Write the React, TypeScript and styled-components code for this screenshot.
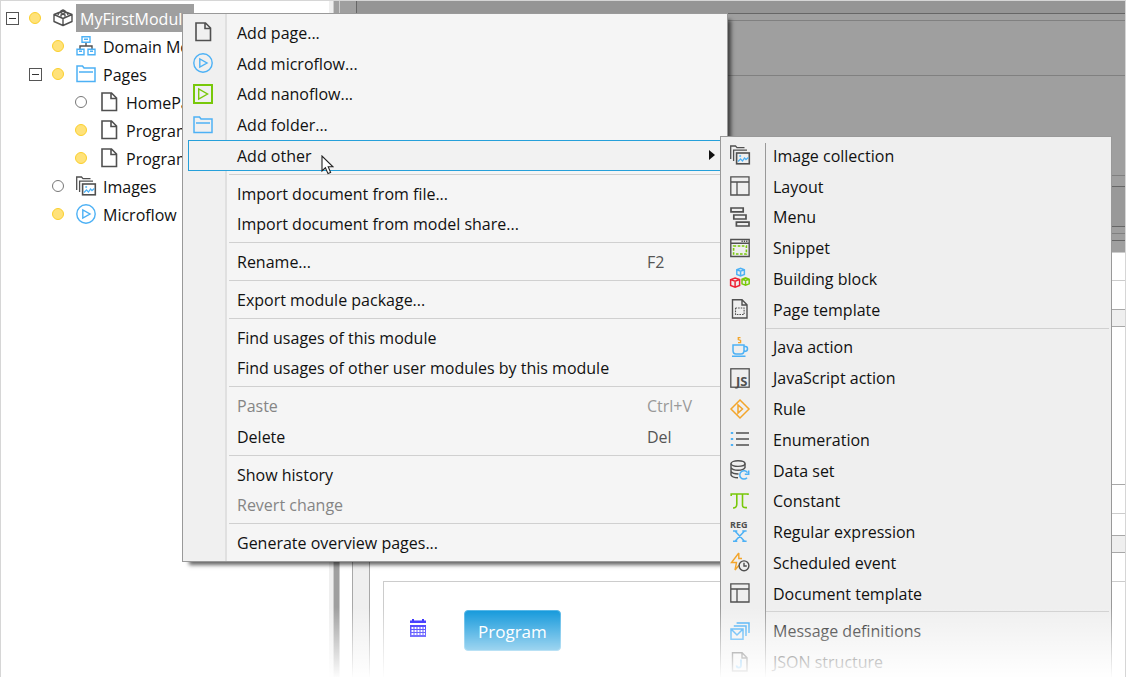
import React from "react";
import styled, { createGlobalStyle, css } from "styled-components";

const ink = "#505050";
const blue = "#4db1f5";
const green = "#78c80a";
const orange = "#f3a52b";

const GlobalStyle = createGlobalStyle`
  *, *::before, *::after { box-sizing: border-box; }
  body {
    margin: 0;
    background: #fff;
    color: #111;
    font: 16px/20px "Open Sans", "Noto Sans", sans-serif;
  }
  button { font: inherit; color: inherit; }
  ul { list-style: none; margin: 0; padding: 0; }
`;

/* ---------- Icons ---------- */

const Svg = styled.svg`
  display: block;
  flex: none;
  width: 20px;
  height: 20px;
  fill: none;
  overflow: visible;
`;

const PageIcon = () => (
  <Svg viewBox="0 0 20 20" stroke={ink} strokeWidth="1.6">
    <path d="M3 1H12.5L17.5 6V18.5H3ZM12 1V6.5H17.5" />
  </Svg>
);

const MicroflowIcon = () => (
  <Svg viewBox="0 0 20 20" stroke={blue} strokeWidth="1.4">
    <circle cx="10" cy="10" r="9.2" />
    <path d="M6.8 6V14L14 10Z" />
  </Svg>
);

const NanoflowIcon = () => (
  <Svg viewBox="0 0 20 20" stroke={green} strokeWidth="1.4">
    <rect x="1" y="1" width="18" height="18" strokeWidth="2" />
    <path d="M5.7 5V15L14.5 10Z" />
  </Svg>
);

const FolderIcon = () => (
  <Svg viewBox="0 0 20 20" stroke={blue} strokeWidth="1.5">
    <path d="M1 17.5V2H6.5L8 4H19V17.5ZM3 8H17" />
  </Svg>
);

const ModuleIcon = () => (
  <Svg viewBox="0 0 20 20" stroke={ink} strokeWidth="1.4" strokeLinejoin="round">
    <path d="M1 6.5L10 3L19 6.5L10 10.5ZM1 6.5V13.5L10 17.5L19 13.5V6.5M10 10.5V17.5" />
    <path d="M5.2 7V5.2L7.4 4.4L9 5.2V7M11 7V5.2L12.8 4.4L14.8 5.2V7M8 4.4V2.8L10 2L12 2.8V4.4M8 8.8V7L10 6.2L12 7V8.8" />
  </Svg>
);

const DomainIcon = () => (
  <Svg viewBox="0 0 20 20" stroke={blue} strokeWidth="1.4">
    <path d="M10 6V10M4 14V10H16V14" stroke={ink} />
    <path d="M6 .8H14V6.2H6ZM1 13.2H8V18.8H1ZM12 13.2H19V18.8H12Z" />
    <path d="M8 3.2H12M3 15.2H6M14 15.2H17" />
  </Svg>
);

const ImagesIcon = () => (
  <Svg viewBox="0 0 20 20" stroke={ink} strokeWidth="1.3">
    <path d="M.7 14V1H5.5L7 2.6H14.5M3.6 16V5.2H17" />
    <rect x="6.6" y="8" width="12.7" height="10.8" strokeWidth="1.6" />
    <path d="M8 16.5L10.5 14L12.5 16L14.5 13L16 14.5L18.4 12.5" stroke={blue} />
    <circle cx="10.2" cy="11" r=".7" fill={blue} stroke={blue} strokeWidth=".6" />
  </Svg>
);

const LayoutIcon = () => (
  <Svg viewBox="0 0 20 20" stroke={ink} strokeWidth="1.3">
    <path d="M.8 .8H19V19H.8ZM.8 6H19M7 6V19" />
  </Svg>
);

const MenuIcon = () => (
  <Svg viewBox="0 0 20 20" stroke={ink} strokeWidth="1.7">
    <path d="M1 1H13.2V4.8H1ZM3.8 8H16V12H3.8ZM6.4 15.2H19V19H6.4Z" />
  </Svg>
);

const SnippetIcon = () => (
  <Svg viewBox="0 0 20 20" stroke={ink} strokeWidth="1.4">
    <path d="M.8 1.5H19.2V18.5H.8ZM.8 5.2H19.2" />
    <path d="M11.5 3.2H18" strokeDasharray="1.3 1" />
    <rect x="3.6" y="8" width="12.8" height="8" stroke={green} strokeWidth="1.6" strokeDasharray="2.6 1.5" />
  </Svg>
);

const Cube = ({ x, y, s, color }: { x: number; y: number; s: number; color: string }) => (
  <path
    transform={`translate(${x} ${y}) scale(${s})`}
    stroke={color}
    strokeWidth={1.5 / s}
    d="M0 2L4.5 .4L9 2V7.8L4.5 9.6L0 7.8ZM0 2L4.5 3.7L9 2M4.5 3.7V9.6"
  />
);

const BlocksIcon = () => (
  <Svg viewBox="0 0 20 20">
    <Cube x={6.8} y={0} s={0.84} color={blue} />
    <Cube x={0.6} y={9.6} s={1} color="#ee2234" />
    <Cube x={12} y={9.6} s={0.8} color={green} />
  </Svg>
);

const TemplateIcon = () => (
  <Svg viewBox="0 0 20 20" stroke={ink} strokeWidth="1.4">
    <path d="M2.5 .8H12L17 5.8V19H2.5ZM12 .8V6H17" />
    <rect x="5.5" y="9" width="8.6" height="6.5" strokeDasharray="1.6 1" strokeWidth="1.1" />
  </Svg>
);

const JavaIcon = () => (
  <Svg viewBox="0 0 20 20" stroke={blue} strokeWidth="1.5">
    <path d="M3 8H14V13.5Q14 17 11 17H6Q3 17 3 13.5ZM14 9.5H15.5Q17.5 9.5 17.5 12Q17.5 14.5 14 14.5M2 19.2H15.5" />
    <path d="M10.5 0.6H8.3V2.6L10.6 3.4V5.6H8" stroke={orange} strokeWidth="1.3" />
  </Svg>
);

const IconText = styled.text`
  font-family: "Open Sans", sans-serif;
  font-weight: 700;
  fill: ${ink};
`;

const JsIcon = () => (
  <Svg viewBox="0 0 20 20">
    <rect x=".8" y=".8" width="18.4" height="18.4" stroke={ink} strokeWidth="1.3" />
    <IconText x="6" y="18" fontSize="13">JS</IconText>
  </Svg>
);

const RuleIcon = () => (
  <Svg viewBox="0 0 20 20" stroke={orange} strokeWidth="1.5">
    <path d="M10 1L19 10L10 19L1 10ZM8 6V14L12.5 10Z" />
  </Svg>
);

const EnumIcon = () => (
  <Svg viewBox="0 0 20 20" stroke={ink} strokeWidth="1.4">
    <path d="M6 4H19M6 10H19M6 16H19" />
    <path d="M.8 4H3.2M.8 10H3.2M.8 16H3.2" stroke={blue} strokeWidth="2.2" />
  </Svg>
);

const DataSetIcon = () => (
  <Svg viewBox="0 0 20 20" stroke={ink} strokeWidth="1.4">
    <ellipse cx="8" cy="3.6" rx="7" ry="2.8" />
    <path d="M1 3.6V15Q2 17.6 8 17.8M15 3.6V8M1 7.6Q2.5 10.3 8 10.3Q13.5 10.3 15 7.6M1 11.4Q2.5 14 8.5 14" />
    <path d="M17.5 12.6A4.2 4.2 0 1 0 17 17.8M18.7 10.4V14.2H14.8" stroke={blue} strokeWidth="1.5" />
  </Svg>
);

const PiIcon = () => (
  <Svg viewBox="0 0 20 20" stroke={green} strokeWidth="1.6">
    <path d="M1.2 5V3H18V4M6.8 3V13Q6.8 17 3 17M12.5 3V14.5Q12.5 17 17 16.6" />
  </Svg>
);

const RegexIcon = () => (
  <Svg viewBox="0 0 20 20">
    <IconText x="0" y="6" fontSize="9">REG</IconText>
    <path d="M5 9L14.5 19.2M14.5 9L5 19.2M3 9H7.3M12.3 9H16.6M3 19.3H7.3M12.3 19.3H16.6" stroke={blue} strokeWidth="1.5" />
  </Svg>
);

const EventIcon = () => (
  <Svg viewBox="0 0 20 20" strokeWidth="1.4">
    <path d="M8.8 1L1.5 10.5H6.5L5 18L9 13.2M8.8 1V6.5H12" stroke={orange} />
    <circle cx="14" cy="13.8" r="4.9" stroke={ink} />
    <path d="M14 10.8V14H16.8" stroke={ink} />
  </Svg>
);

const MessagesIcon = () => (
  <Svg viewBox="0 0 20 20" stroke="#35a6f5" strokeWidth="1.5">
    <path d="M1 8H13V18.2H1ZM1 8L7 14L13 8M3.8 5H16V15M6.6 2H19V12" />
  </Svg>
);

const JsonIcon = () => (
  <Svg viewBox="0 0 20 20" stroke={ink} strokeWidth="1.4">
    <path d="M2.5 .8H12L17 5.8V19H2.5ZM12 .8V6H17" />
    <path d="M11 7.5V13.2Q11 15.6 8.6 15.6Q6.6 15.6 6.6 13.6" stroke="#3da9f5" strokeWidth="1.7" />
  </Svg>
);

const CalendarIcon = styled.svg`
  display: block;
  width: 16px;
  height: 18px;
`;

/* ---------- Shell ---------- */

const Frame = styled.div`
  position: relative;
  display: flex;
  min-height: 100vh;
  overflow: hidden;
  border: 1px solid #d6d6d6;
  border-bottom: 0;
`;

const TreePane = styled.nav`
  flex: none;
  width: 332px;
  padding-top: 3px;
  border-right: 4px solid #efefef;
`;

const Splitter = styled.div`
  flex: none;
  width: 7px;
  background: #9f9f9f;
  border: solid #ccc;
  border-width: 0 1px;
`;

/* ---------- Tree ---------- */

const TreeRow = styled.li<{ $level: number }>`
  display: flex;
  align-items: center;
  height: 28px;
  padding-left: ${(p) => 5 + p.$level * 23}px;
  white-space: nowrap;
`;

const Toggle = styled.button`
  position: relative;
  width: 13px;
  height: 13px;
  padding: 0;
  background: #fff;
  border: 1px solid #555;

  &::after {
    content: "";
    position: absolute;
    inset: 5px 2px;
    background: #333;
  }
`;

const ToggleGap = styled.span`
  width: 13px;
`;

const Dot = styled.span<{ $on: boolean }>`
  width: 12px;
  height: 12px;
  margin: 0 12px 0 10px;
  border-radius: 50%;
  background: ${(p) => (p.$on ? "#ffe27a" : "#fff")};
  border: 1px solid ${(p) => (p.$on ? "#fbcf2c" : "#777")};
`;

const TreeLabel = styled.span<{ $selected?: boolean }>`
  margin-left: 3px;
  padding: 5px 3px 3px 4px;
  ${(p) =>
    p.$selected &&
    css`
      background: #9f9f9f;
      color: #fff;
    `}
`;

type Node = { level: number; label: string; on: boolean; open?: boolean; selected?: boolean; icon: React.ReactNode };

const nodes: Node[] = [
  { level: 0, label: "MyFirstModule", on: true, open: true, selected: true, icon: <ModuleIcon /> },
  { level: 1, label: "Domain Model", on: true, icon: <DomainIcon /> },
  { level: 1, label: "Pages", on: true, open: true, icon: <FolderIcon /> },
  { level: 2, label: "HomePage", on: false, icon: <PageIcon /> },
  { level: 2, label: "Programs", on: true, icon: <PageIcon /> },
  { level: 2, label: "Program", on: true, icon: <PageIcon /> },
  { level: 1, label: "Images", on: false, icon: <ImagesIcon /> },
  { level: 1, label: "Microflow", on: true, icon: <MicroflowIcon /> },
];

/* ---------- Editor ---------- */

const Editor = styled.main`
  flex: 1;
  display: flex;
  flex-direction: column;
  min-width: 0;
`;

const Band = styled.div<{ $h: number; $fill?: string; $line: string }>`
  flex: none;
  height: ${(p) => p.$h}px;
  background: ${(p) => p.$fill ?? "#fff"};
  border-bottom: 1px solid ${(p) => p.$line};
`;

const Corner = styled.div`
  width: 17px;
  height: 100%;
  background: #9f9f9f;
  border-right: 1px solid #666;
`;

const Canvas = styled.div`
  flex: 1;
  display: flex;
  padding-left: 12px;
`;

const Rail = styled.div`
  flex: none;
  width: 18px;
  background: #efefef;
  border: solid #a8a8a8;
  border-width: 0 1px;
`;

const Sheet = styled.div`
  flex: 1;
  display: flex;
  flex-direction: column;
`;

const Container = styled.section`
  flex: 1;
  display: flex;
  align-items: flex-start;
  gap: 38px;
  margin: 28px 0 0 13px;
  padding: 28px 26px;
  border: solid #ccc;
  border-width: 1px 0 0 1px;
`;

const CalendarSlot = styled.div`
  padding-top: 9px;
`;

const ProgramButton = styled.button`
  height: 41px;
  padding: 2px 13px 0;
  border: 1px solid #4fb4e6;
  border-radius: 4px;
  background: #0b95da;
  color: #fff;
  font-size: 17px;
`;

/* ---------- Menus ---------- */

const MenuPanel = styled.ul<{ $sub?: boolean }>`
  position: absolute;
  display: flex;
  flex-direction: column;
  border: 1px solid #999;
  ${(p) =>
    p.$sub
      ? css`
          left: 719px;
          top: 135px;
          width: 392px;
          height: 541px;
          padding: 3px 2px 0 0;
          border-bottom: 0;
          background: #efefef;
        `
      : css`
          left: 181px;
          top: 12px;
          width: 546px;
          height: 549px;
          padding: 3px 5px;
          background: linear-gradient(90deg, #f0f0f0 42px, #e0e0e0 42px, #e0e0e0 44px, #f5f5f5 44px);
          box-shadow: 5px 5px 4px -2px rgba(0, 0, 0, 0.6);
        `}
`;

const Gutter = styled.li`
  position: absolute;
  left: 44px;
  top: 6px;
  bottom: 0;
  width: 1px;
  background: #999;
`;

const Slot = styled.li`
  flex: 1;
  display: flex;
`;

const MenuItem = styled.button<{ $sub?: boolean; $active?: boolean; $dim?: boolean }>`
  flex: 1;
  display: flex;
  align-items: center;
  gap: ${(p) => (p.$sub ? 23 : 24)}px;
  padding: 0 6px 0 ${(p) => (p.$sub ? 8 : 4)}px;
  border: 1px solid ${(p) => (p.$active ? "#26a0da" : "transparent")};
  background: ${(p) => (p.$active ? "#f2f2f2" : "none")};
  color: ${(p) => (p.$dim ? "#858585" : "inherit")};
  text-align: left;
  white-space: nowrap;
`;

const IconSlot = styled.span`
  flex: none;
  width: 20px;
`;

const Label = styled.span`
  flex: 1;
  padding-top: 1px;
`;

const Shortcut = styled.span<{ $dim?: boolean }>`
  width: 68px;
  padding-top: 1px;
  color: ${(p) => (p.$dim ? "#999" : "#555")};
`;

const Arrow = styled.span`
  border: solid transparent;
  border-width: 5px 0 5px 6px;
  border-left-color: #111;
`;

const Separator = styled.li<{ $sub?: boolean }>`
  flex: none;
  height: 7px;
  margin-left: ${(p) => (p.$sub ? 45 : 41)}px;
  padding-top: 3px;

  &::after {
    content: "";
    display: block;
    height: 1px;
    background: #d0d0d0;
  }
`;

type Entry = null | { label: string; icon?: React.ReactNode; keys?: string; dim?: boolean; active?: boolean };

const mainEntries: Entry[] = [
  { label: "Add page...", icon: <PageIcon /> },
  { label: "Add microflow...", icon: <MicroflowIcon /> },
  { label: "Add nanoflow...", icon: <NanoflowIcon /> },
  { label: "Add folder...", icon: <FolderIcon /> },
  { label: "Add other", active: true },
  null,
  { label: "Import document from file..." },
  { label: "Import document from model share..." },
  null,
  { label: "Rename...", keys: "F2" },
  null,
  { label: "Export module package..." },
  null,
  { label: "Find usages of this module" },
  { label: "Find usages of other user modules by this module" },
  null,
  { label: "Paste", keys: "Ctrl+V", dim: true },
  { label: "Delete", keys: "Del" },
  null,
  { label: "Show history" },
  { label: "Revert change", dim: true },
  null,
  { label: "Generate overview pages..." },
];

const subEntries: Entry[] = [
  { label: "Image collection", icon: <ImagesIcon /> },
  { label: "Layout", icon: <LayoutIcon /> },
  { label: "Menu", icon: <MenuIcon /> },
  { label: "Snippet", icon: <SnippetIcon /> },
  { label: "Building block", icon: <BlocksIcon /> },
  { label: "Page template", icon: <TemplateIcon /> },
  null,
  { label: "Java action", icon: <JavaIcon /> },
  { label: "JavaScript action", icon: <JsIcon /> },
  { label: "Rule", icon: <RuleIcon /> },
  { label: "Enumeration", icon: <EnumIcon /> },
  { label: "Data set", icon: <DataSetIcon /> },
  { label: "Constant", icon: <PiIcon /> },
  { label: "Regular expression", icon: <RegexIcon /> },
  { label: "Scheduled event", icon: <EventIcon /> },
  { label: "Document template", icon: <LayoutIcon /> },
  null,
  { label: "Message definitions", icon: <MessagesIcon /> },
  { label: "JSON structure", icon: <JsonIcon /> },
];

const Menu = ({ entries, sub }: { entries: Entry[]; sub?: boolean }) => (
  <MenuPanel $sub={sub} role="menu">
    {sub && <Gutter role="presentation" />}
    {entries.map((e, i) =>
      e ? (
        <Slot key={i} role="none">
          <MenuItem type="button" role="menuitem" $sub={sub} $active={e.active} $dim={e.dim} disabled={e.dim}>
            <IconSlot>{e.icon}</IconSlot>
            <Label>{e.label}</Label>
            {e.keys && <Shortcut $dim={e.dim}>{e.keys}</Shortcut>}
            {e.active && <Arrow />}
          </MenuItem>
        </Slot>
      ) : (
        <Separator key={i} role="separator" $sub={sub} />
      )
    )}
  </MenuPanel>
);

const Pointer = styled.svg`
  position: absolute;
  left: 320px;
  top: 154px;
  width: 13px;
  height: 20px;
`;

const Fade = styled.div`
  position: absolute;
  inset: auto -1px 0;
  height: 72px;
  background: linear-gradient(rgba(255, 255, 255, 0), #fff);
  pointer-events: none;
`;

export default function App() {
  return (
    <>
      <GlobalStyle />
      <Frame>
        <TreePane aria-label="Project explorer">
          <ul>
            {nodes.map((n) => (
              <TreeRow key={n.label} $level={n.level}>
                {n.open ? <Toggle type="button" aria-label={`Collapse ${n.label}`} /> : <ToggleGap />}
                <Dot $on={n.on} />
                {n.icon}
                <TreeLabel $selected={n.selected}>{n.label}</TreeLabel>
              </TreeRow>
            ))}
          </ul>
        </TreePane>
        <Splitter />
        <Editor>
          <Band $h={13} $fill="#959595" $line="#666"><Corner /></Band>
          <Band $h={7} $fill="#9f9f9f" $line="#808080" />
          <Band $h={55} $fill="#9f9f9f" $line="#808080" />
          <Band $h={100} $fill="#9f9f9f" $line="#808080" />
          <Band $h={11} $fill="#9f9f9f" $line="#666" />
          <Band $h={40} $fill="#999" $line="#666" />
          <Band $h={7} $fill="#9f9f9f" $line="#808080" />
          <Band $h={7} $fill="#9f9f9f" $line="#666" />
          <Band $h={12} $fill="#9f9f9f" $line="#ccc" />
          <Canvas>
            <Rail />
            <Sheet>
              <Band $h={28} $line="#ccc" />
              <Band $h={29} $line="#a8a8a8" />
              <Band $h={17} $fill="#efefef" $line="#a8a8a8" />
              <Band $h={158} $line="#a8a8a8" />
              <Band $h={29} $line="#ccc" />
              <Band $h={22} $line="#a8a8a8" />
              <Band $h={17} $fill="#efefef" $line="#a8a8a8" />
              <Container>
                <CalendarSlot>
                  <CalendarIcon viewBox="0 0 16 18" aria-hidden="true">
                    <path fill="#1a10ff" d="M0 4V1.5H2V0H4V1.5H12V0H14V1.5H16V4ZM0 6H16V18H0Z" />
                    <path
                      stroke="#fff"
                      strokeWidth="1.8"
                      strokeDasharray="2 1"
                      d="M1.5 9H15M1.5 12H15M1.5 15H15"
                    />
                  </CalendarIcon>
                </CalendarSlot>
                <ProgramButton type="button">Program</ProgramButton>
              </Container>
            </Sheet>
          </Canvas>
        </Editor>
        <Menu entries={mainEntries} />
        <Menu entries={subEntries} sub />
        <Pointer viewBox="0 0 13 20" aria-hidden="true">
          <path d="M1 1V16L4.4 12.8L7 18.6L9.6 17.4L7.2 11.8H12Z" fill="#fff" stroke="#222" strokeWidth="1.1" />
        </Pointer>
        <Fade />
      </Frame>
    </>
  );
}
